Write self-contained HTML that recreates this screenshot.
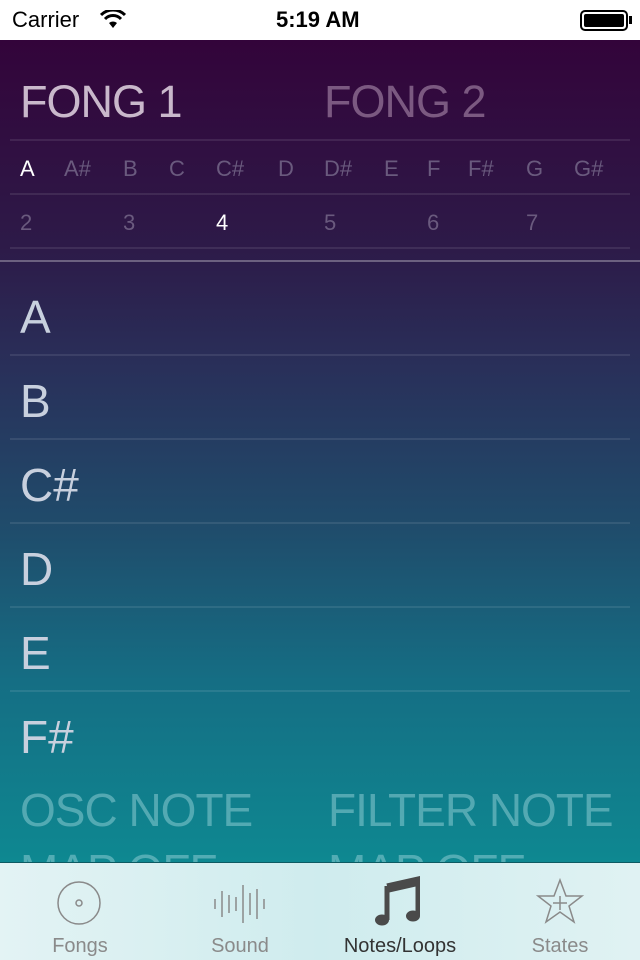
<!DOCTYPE html><html><head><style>
*{margin:0;padding:0;box-sizing:border-box}
body{width:640px;height:960px;overflow:hidden;font-family:"Liberation Sans",sans-serif;position:relative;background:#fff}
.sb{position:absolute;top:0;left:0;width:640px;height:40px;background:#fff;font-size:22px;color:#000}
.main{position:absolute;top:40px;left:0;width:640px;height:822px;background:linear-gradient(#33043a 0%,#2d1a48 25%,#29305a 40%,#1f4d6c 60%,#156e84 78%,#0e8891 100%);overflow:hidden}
.t{position:absolute;white-space:nowrap}
.line{position:absolute;height:2px;background:rgba(255,255,255,.09)}
.tab{position:absolute;top:862px;left:0;width:640px;height:98px;background:linear-gradient(90deg,#e3f3f4,#cfecee 50%,#e0f2f3);border-top:1px solid #0d5a62}
.tl{position:absolute;top:72px;font-size:20px;color:#8a8a8a;text-align:center;width:160px}
</style></head><body>
<div class="sb">
<span class="t" style="left:12px;top:7px">Carrier</span>
<svg class="t" style="left:100px;top:10px" width="26" height="20" viewBox="0 0 26 20"><path d="M13 18 L9 13 A6 6 0 0 1 17 13Z" fill="#000"/><path d="M5 9 A11 11 0 0 1 21 9" stroke="#000" stroke-width="3" fill="none"/><path d="M1 5 A17 17 0 0 1 25 5" stroke="#000" stroke-width="3" fill="none"/></svg>
<span class="t" style="left:276px;top:7px;font-weight:bold">5:19 AM</span>
<div class="t" style="left:580px;top:10px;width:48px;height:21px;border:2px solid #000;border-radius:5px;padding:2px"><div style="background:#000;width:100%;height:100%;border-radius:2px"></div></div>
<div class="t" style="left:629px;top:16px;width:3px;height:8px;background:#000"></div>
</div>
<div class="main">
<span class="t" style="left:20px;top:36px;font-size:45px;color:#c9b8cb;letter-spacing:-1px">FONG 1</span>
<span class="t" style="left:324px;top:36px;font-size:45px;color:#7b5981;letter-spacing:-1px">FONG 2</span>
<div class="line" style="left:10px;top:99px;width:620px"></div>
<div style="position:absolute;top:116px;font-size:22px;color:#6a5a7e">
<span class="t" style="left:20px;color:#fff">A</span><span class="t" style="left:64px">A#</span><span class="t" style="left:123px">B</span><span class="t" style="left:169px">C</span><span class="t" style="left:216px">C#</span><span class="t" style="left:278px">D</span><span class="t" style="left:324px">D#</span><span class="t" style="left:384px">E</span><span class="t" style="left:427px">F</span><span class="t" style="left:468px">F#</span><span class="t" style="left:526px">G</span><span class="t" style="left:574px">G#</span>
</div>
<div class="line" style="left:10px;top:153px;width:620px"></div>
<div style="position:absolute;top:170px;font-size:22px;color:#6a5a7e">
<span class="t" style="left:20px">2</span><span class="t" style="left:123px">3</span><span class="t" style="left:216px;color:#fff">4</span><span class="t" style="left:324px">5</span><span class="t" style="left:427px">6</span><span class="t" style="left:526px">7</span>
</div>
<div class="line" style="left:10px;top:207px;width:620px"></div>
<div class="line" style="left:0;top:220px;width:640px;background:rgba(255,255,255,.3)"></div>
<div style="font-size:46px;color:#c8d0de">
<span class="t" style="left:20px;top:250px">A</span>
<div class="line" style="left:10px;top:314px;width:620px"></div>
<span class="t" style="left:20px;top:334px">B</span>
<div class="line" style="left:10px;top:398px;width:620px"></div>
<span class="t" style="left:20px;top:418px">C#</span>
<div class="line" style="left:10px;top:482px;width:620px"></div>
<span class="t" style="left:20px;top:502px">D</span>
<div class="line" style="left:10px;top:566px;width:620px"></div>
<span class="t" style="left:20px;top:586px">E</span>
<div class="line" style="left:10px;top:650px;width:620px"></div>
<span class="t" style="left:20px;top:670px">F#</span>
</div>
<div style="font-size:46px;color:rgba(150,210,215,.5)">
<span class="t" style="left:20px;top:743px;letter-spacing:-1px">OSC NOTE</span>
<span class="t" style="left:328px;top:743px;letter-spacing:-1px">FILTER NOTE</span>
<span class="t" style="left:20px;top:804px;letter-spacing:-1px">MAP OFF</span>
<span class="t" style="left:328px;top:804px;letter-spacing:-1px">MAP OFF</span>
</div>
</div>
<div class="tab">
<svg class="t" style="left:56px;top:17px" width="46" height="46"><circle cx="23" cy="23" r="21" fill="none" stroke="#8a8a8a" stroke-width="1.5"/><circle cx="23" cy="23" r="3" fill="none" stroke="#8a8a8a" stroke-width="1.5"/></svg>
<svg class="t" style="left:212px;top:20px" width="56" height="42" stroke="#8a8a8a" stroke-width="1.5"><path d="M3 16V26M10 8V34M17 12V30M24 14V28M31 2V40M38 10V32M45 6V36M52 16V26"/></svg>
<svg class="t" style="left:374px;top:13px" width="46" height="50"><path d="M13 10L44 3V40" stroke="#4a4a4a" stroke-width="5" fill="none"/><path d="M13 10V44" stroke="#4a4a4a" stroke-width="5"/><path d="M13 8L44 1V10L13 17Z" fill="#4a4a4a"/><ellipse cx="8" cy="44" rx="7" ry="5.5" fill="#4a4a4a"/><ellipse cx="39" cy="40" rx="7" ry="5.5" fill="#4a4a4a"/></svg>
<svg class="t" style="left:536px;top:15px" width="48" height="48"><path d="M24 2L30 18H46L33 28L38 44L24 34L10 44L15 28L2 18H18Z" fill="none" stroke="#8a8a8a" stroke-width="1.5"/><path d="M24 18V32M17 25H31" stroke="#8a8a8a" stroke-width="1.5"/></svg>
<div class="tl" style="left:0">Fongs</div>
<div class="tl" style="left:160px">Sound</div>
<div class="tl" style="left:320px;color:#333">Notes/Loops</div>
<div class="tl" style="left:480px">States</div>
</div>
</body></html>
